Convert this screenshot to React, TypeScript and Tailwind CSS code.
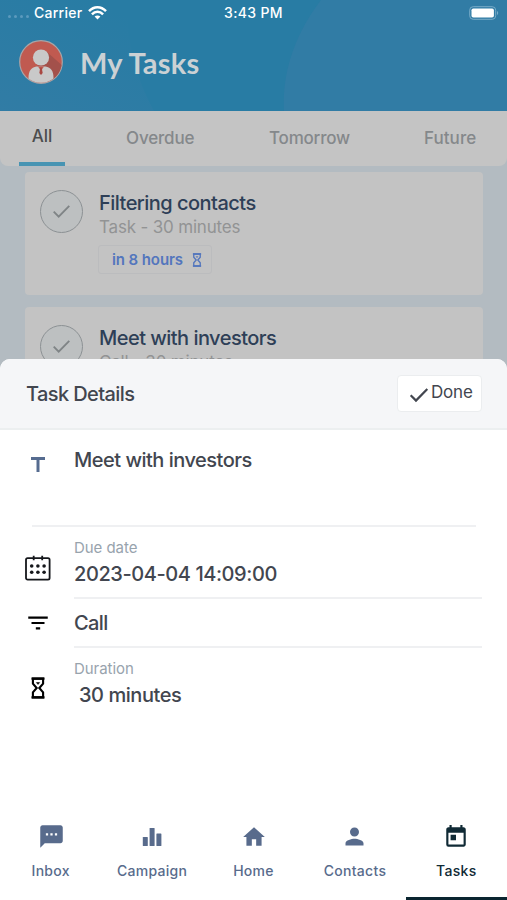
import { clsx } from 'clsx'
import { MdFilterList, MdHome, MdPerson, MdSms, MdTitle, MdToday } from 'react-icons/md'
import type { ReactNode } from 'react'

interface Task {
  title: string
  meta: string
  due?: string
}

interface NavItem {
  label: string
  icon: ReactNode
  active?: boolean
}

const tasks: Task[] = [
  { title: 'Filtering contacts', meta: 'Task - 30 minutes', due: 'in 8 hours' },
  { title: 'Meet with investors', meta: 'Call - 30 minutes' },
]

const navItems: NavItem[] = [
  { label: 'Inbox', icon: <MdSms size={27} className="ml-[2px]" /> },
  { label: 'Campaign', icon: <BarsIcon /> },
  { label: 'Home', icon: <MdHome size={26} /> },
  { label: 'Contacts', icon: <MdPerson size={27} /> },
  { label: 'Tasks', icon: <MdToday size={26} />, active: true },
]

function BarsIcon() {
  return (
    <svg width="20" height="20" viewBox="0 0 20 20" fill="currentColor">
      <rect x="0.8" y="10" width="5" height="9" rx="0.6" />
      <rect x="7.6" y="1" width="5" height="18" rx="0.6" />
      <rect x="14.4" y="6.5" width="5" height="12.5" rx="0.6" />
    </svg>
  )
}

function CheckIcon({ className }: { className?: string }) {
  return (
    <svg className={className} viewBox="0 0 20 16" fill="none" stroke="currentColor">
      <path d="M1.7 8.2 7 13.6 18.3 2" />
    </svg>
  )
}

function HourglassIcon({ className }: { className?: string }) {
  return (
    <svg className={className} viewBox="0 0 14 22" fill="none" stroke="currentColor" strokeWidth="2.1">
      <path d="M1.9 1.6h10.2v5L8.3 11l3.8 4.4v5H1.9v-5L5.7 11 1.9 6.6z" />
      <path d="M0.5 1.6h13M0.5 20.4h13" />
      <path d="M5.4 5.6h3.2L7 7.4z" fill="currentColor" strokeWidth="0.6" />
    </svg>
  )
}

function CalendarIcon() {
  return (
    <svg width="26" height="26" viewBox="0 0 26 26" fill="none" stroke="currentColor" strokeWidth="1.8">
      <rect x="1" y="3.2" width="23.6" height="21.4" rx="1.6" />
      <path d="M8.7 0.7v4.6M17.2 0.7v4.6" />
      <g fill="currentColor" stroke="none">
        {[6.7, 12.9, 19.1].map((x) => (
          <g key={x}>
            <circle cx={x} cy="11" r="1.8" />
            <circle cx={x} cy="17.2" r="1.8" />
          </g>
        ))}
      </g>
    </svg>
  )
}

function Avatar() {
  return (
    <svg width="44" height="44" viewBox="0 0 44 44">
      <defs>
        <clipPath id="avatar">
          <circle cx="22" cy="22" r="20.8" />
        </clipPath>
      </defs>
      <circle cx="22" cy="22" r="21.3" fill="#c05a50" stroke="#a9a5a7" strokeWidth="1.2" />
      <g clipPath="url(#avatar)">
        <path d="M28 12 44 26v18H31L17 28z" fill="#a3514b" />
        <path d="M9.5 44V38c0-7 2.5-10.5 8-11.5h9c5.500 1 8 4.500 8 11.500v6z" fill="#c9c9c9" />
        <path d="M19 26.500h6L22 31z" fill="#c05a50" />
        <path d="M21.300 27.500h1.400l1 5.500-1.700 2-1.700-2z" fill="#a94842" />
        <circle cx="22" cy="17.500" r="8.100" fill="#c9c9c9" />
      </g>
    </svg>
  )
}

function StatusBar() {
  return (
    <div className="flex h-[26px] items-center px-2 pb-[1px] text-[14px] font-medium text-white">
      <div className="flex flex-1 items-center">
        <div className="mt-2 flex gap-[3px]">
          {[0, 1, 2, 3].map((i) => (
            <span key={i} className="h-[3px] w-[3px] rounded-full bg-[#5c9abd]" />
          ))}
        </div>
        <span className="ml-[5px] tracking-[0.25px]">Carrier</span>
        <svg className="ml-[6px]" width="19" height="14" viewBox="0 0 19 14" fill="none" stroke="white" strokeWidth="2.5">
          <path d="M1 5.2C6-.1 13 0 18 5.2M3.9 8.3c3.3-3.3 7.9-3.3 11.2 0" />
          <path d="m9.5 13.5-2.9-3c1.7-1.5 4.1-1.5 5.8 0z" fill="white" stroke="none" />
        </svg>
      </div>
      <span className="tracking-[0.35px]">3:43 PM</span>
      <div className="flex flex-1 justify-end">
        <svg width="30" height="14" viewBox="0 0 30 14">
          <rect x="0.7" y="0.7" width="26" height="12.6" rx="3.5" fill="none" stroke="#78acc8" />
          <rect x="2.500" y="2.400" width="22.400" height="9.200" rx="1.800" fill="white" />
          <path d="M28 5v4c1.600-.5 1.600-3.500 0-4z" fill="#78acc8" />
        </svg>
      </div>
    </div>
  )
}

function Header() {
  return (
    <header className="relative h-[111px] overflow-hidden bg-[#317ca5]">
      <svg className="absolute inset-0" width="507" height="111" viewBox="0 0 507 111">
        <defs>
          <linearGradient id="wash" x1="0" y1="1" x2="0.6" y2="0">
            <stop offset="0" stopColor="#317ca5" />
            <stop offset="1" stopColor="#287ca4" />
          </linearGradient>
        </defs>
        <path d="M0 0h321c-26 34-39 72-37 111H0z" fill="#287ca4" />
        <path d="M0 0h128c-2 46 10 81 26 111H0z" fill="url(#wash)" />
      </svg>
      <div className="relative">
        <StatusBar />
        <div className="flex items-center pt-[14px] pl-[19px]">
          <Avatar />
          <h1 className="ml-[17px] pt-[1px] font-['Lato',sans-serif] text-[29px] leading-[43px] font-bold tracking-[0.2px] text-[#cbd1d4]">My Tasks</h1>
        </div>
      </div>
    </header>
  )
}

function Tabs() {
  return (
    <nav className="flex h-[55px] rounded-b-lg bg-[#c4c4c4] pl-[19px] text-[17px] leading-[54px] font-medium text-[#84888b]">
      <span className="w-[46px] border-b-4 border-[#4794b3] text-center leading-[51px] text-[#4c4d4e]">All</span>
      <span className="ml-[61px] w-[70px] tracking-[-0.15px]">Overdue</span>
      <span className="ml-[73px] w-[82px] tracking-[-0.2px]">Tomorrow</span>
      <span className="ml-[73px] tracking-[0.05px]">Future</span>
    </nav>
  )
}

function TaskCard({ title, meta, due }: Task) {
  return (
    <div className="flex h-[123px] shrink-0 rounded-[4px] bg-[#c3c3c3] pt-[18px] pl-[15px]">
      <div className="flex h-[43px] w-[43px] items-center justify-center rounded-full border border-[#8c9194] bg-[#bdc0c1]">
        <CheckIcon className="h-[15px] w-[19px] stroke-2 text-[#7f8486]" />
      </div>
      <div className="ml-4">
        <div className="text-[20px] leading-[26px] font-medium tracking-[-0.53px] text-[#2e3f57]">{title}</div>
        <div className="text-[17px] leading-[22px] tracking-[-0.18px] text-[#929394]">{meta}</div>
        {due && (
          <div className="mt-[7px] -ml-[1px] flex h-[29px] w-[114px] items-center rounded-[3px] border border-[#bbbcbe] pt-[2px] pl-[13px] text-[15px] font-semibold tracking-[-0.1px] text-[#5376bd]">
            {due}
            <HourglassIcon className="mb-[2px] ml-[9px] h-[14px] w-[10px]" />
          </div>
        )}
      </div>
    </div>
  )
}

function TaskDetails() {
  return (
    <section className="absolute inset-x-0 top-[359px] bottom-0 flex flex-col overflow-hidden rounded-t-[10px] bg-white text-[#42464f]">
      <div className="flex h-[71px] items-center justify-between border-b-2 border-[#eceff0] bg-[#f5f6f8] pr-[25px] pl-[26px]">
        <h2 className="text-[20px] font-medium tracking-[-0.6px]">Task Details</h2>
        <button className="flex h-[37px] w-[85px] items-center rounded-[4px] border border-[#ebedef] bg-white pl-[11px] text-[17px]">
          <CheckIcon className="mt-[2px] h-[16px] w-[20px] stroke-[2.2]" />
          <span className="ml-[2px] pb-[1px] tracking-[-0.2px]">Done</span>
        </button>
      </div>

      <div className="mr-[31px] ml-[32px] flex h-[97px] border-b-2 border-[#eff0f2]">
        <MdTitle className="mt-[23px] -ml-[6px] h-[24px] w-[24px] text-[#566c90]" />
        <div className="ml-[24px] pt-[17px] text-[20px] leading-[26px] font-medium tracking-[-0.5px]">Meet with investors</div>
      </div>

      <div className="flex h-[72px] pl-[25px]">
        <div className="w-[49px] pt-[28px] text-[#15171b]">
          <CalendarIcon />
        </div>
        <div className="mr-[25px] flex-1 border-b-2 border-[#eff0f2] pt-[11px]">
          <div className="text-[15px] leading-[20px] tracking-[-0.05px] text-[#98a3ad]">Due date</div>
          <div className="mt-[3px] text-[20px] leading-[26px] font-medium tracking-[-0.42px]">2023-04-04 14:09:00</div>
        </div>
      </div>

      <div className="flex h-[49px] pl-[25px]">
        <div className="w-[49px] pt-[11px] text-black">
          <MdFilterList className="h-[26px] w-[26px]" />
        </div>
        <div className="mr-[25px] flex-1 border-b-2 border-[#eff0f2] pt-[11px] text-[20px] leading-[26px] font-medium tracking-[-0.6px]">Call</div>
      </div>

      <div className="flex pl-[31px]">
        <div className="w-[43px] pt-[29px] text-black">
          <HourglassIcon className="h-[22px] w-[14px]" />
        </div>
        <div className="pt-[11px]">
          <div className="text-[15px] leading-[20px] tracking-[-0.05px] text-[#98a3ad]">Duration</div>
          <div className="mt-[3px] pl-[5px] text-[20px] leading-[26px] font-medium tracking-[-0.45px]">30 minutes</div>
        </div>
      </div>

      <BottomNav />
    </section>
  )
}

function BottomNav() {
  return (
    <nav className="mt-auto flex h-[84px]">
      {navItems.map((item) => (
        <div
          key={item.label}
          className={clsx(
            'flex flex-1 flex-col items-center border-b-[3px] pt-[6px] text-[14px] font-medium tracking-[0.3px]',
            item.active ? 'border-[#0b2530] text-[#102a35]' : 'border-transparent text-[#586b8c]',
          )}
        >
          <div className="flex h-[29px] items-center">{item.icon}</div>
          <span className="mt-[10px] leading-[20px]">{item.label}</span>
        </div>
      ))}
    </nav>
  )
}

export default function App() {
  return (
    <div className="relative h-[900px] w-[507px] overflow-hidden bg-[#b3bbc1] font-['Inter',sans-serif]">
      <Header />
      <Tabs />
      <main className="flex flex-col gap-3 pt-[6px] pr-6 pl-[25px]">
        {tasks.map((task) => (
          <TaskCard key={task.title} {...task} />
        ))}
      </main>
      <TaskDetails />
    </div>
  )
}
